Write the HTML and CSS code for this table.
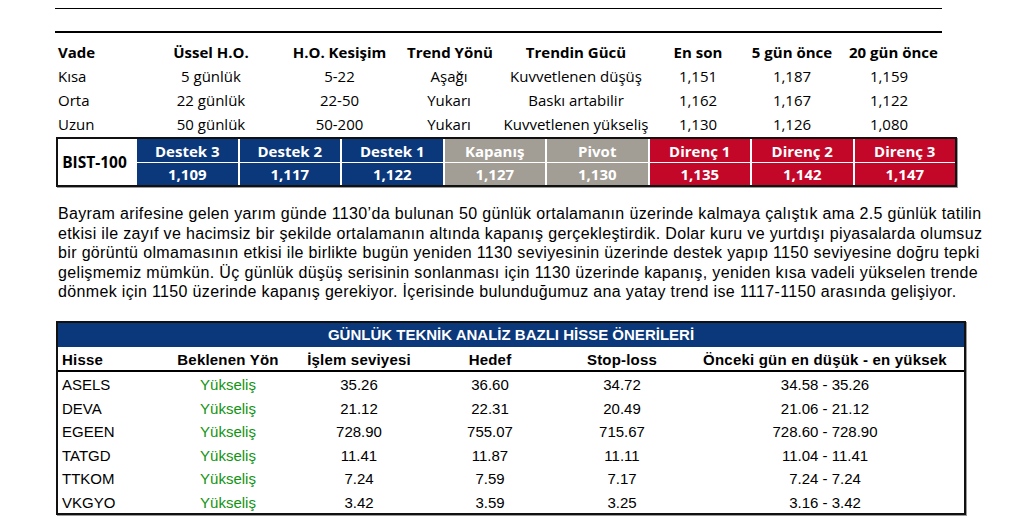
FILE: index.html
```html
<!DOCTYPE html>
<html lang="tr">
<head>
<meta charset="utf-8">
<title>Teknik Analiz</title>
<link rel="stylesheet" href="styles.css">
</head>
<body>
<div class="page">
  <div class="rule-thin"></div>
  <div class="rule-thick"></div>

  <div class="trend">
    <div class="th left">Vade</div><div class="th">Üssel H.O.</div><div class="th">H.O. Kesişim</div><div class="th">Trend Yönü</div><div class="th">Trendin Gücü</div><div class="th">En son</div><div class="th">5 gün önce</div><div class="th">20 gün önce</div>
    <div class="left">Kısa</div><div>5 günlük</div><div>5-22</div><div>Aşağı</div><div>Kuvvetlenen düşüş</div><div>1,151</div><div>1,187</div><div>1,159</div>
    <div class="left">Orta</div><div>22 günlük</div><div>22-50</div><div>Yukarı</div><div>Baskı artabilir</div><div>1,162</div><div>1,167</div><div>1,122</div>
    <div class="left">Uzun</div><div>50 günlük</div><div>50-200</div><div>Yukarı</div><div>Kuvvetlenen yükseliş</div><div>1,130</div><div>1,126</div><div>1,080</div>
  </div>

  <div class="levels">
    <div class="lv-name">BIST-100</div>
    <div class="lv blue">Destek 3</div><div class="lv blue">Destek 2</div><div class="lv blue">Destek 1</div><div class="lv gray">Kapanış</div><div class="lv gray">Pivot</div><div class="lv red">Direnç 1</div><div class="lv red">Direnç 2</div><div class="lv red">Direnç 3</div>
    <div class="lv blue">1,109</div><div class="lv blue">1,117</div><div class="lv blue">1,122</div><div class="lv gray">1,127</div><div class="lv gray">1,130</div><div class="lv red">1,135</div><div class="lv red">1,142</div><div class="lv red">1,147</div>
  </div>

  <p class="comment">
    <span class="jl">Bayram arifesine gelen yarım günde 1130’da bulunan 50 günlük ortalamanın üzerinde kalmaya çalıştık ama 2.5 günlük tatilin</span>
    <span class="jl">etkisi ile zayıf ve hacimsiz bir şekilde ortalamanın altında kapanış gerçekleştirdik. Dolar kuru ve yurtdışı piyasalarda olumsuz</span>
    <span class="jl">bir görüntü olmamasının etkisi ile birlikte bugün yeniden 1130 seviyesinin üzerinde destek yapıp 1150 seviyesine doğru tepki</span>
    <span class="jl">gelişmemiz mümkün. Üç günlük düşüş serisinin sonlanması için 1130 üzerinde kapanış, yeniden kısa vadeli yükselen trende</span>
    <span class="ll">dönmek için 1150 üzerinde kapanış gerekiyor. İçerisinde bulunduğumuz ana yatay trend ise 1117-1150 arasında gelişiyor.</span>
  </p>

  <div class="picks">
    <div class="picks-title">GÜNLÜK TEKNİK ANALİZ BAZLI HİSSE ÖNERİLERİ</div>
    <div class="picks-grid head">
      <div class="left">Hisse</div><div>Beklenen Yön</div><div>İşlem seviyesi</div><div>Hedef</div><div>Stop-loss</div><div>Önceki gün en düşük - en yüksek</div>
    </div>
    <div class="picks-body">
      <div class="picks-grid"><div class="left">ASELS</div><div class="up">Yükseliş</div><div>35.26</div><div>36.60</div><div>34.72</div><div>34.58 - 35.26</div></div>
      <div class="picks-grid"><div class="left">DEVA</div><div class="up">Yükseliş</div><div>21.12</div><div>22.31</div><div>20.49</div><div>21.06 - 21.12</div></div>
      <div class="picks-grid"><div class="left">EGEEN</div><div class="up">Yükseliş</div><div>728.90</div><div>755.07</div><div>715.67</div><div>728.60 - 728.90</div></div>
      <div class="picks-grid"><div class="left">TATGD</div><div class="up">Yükseliş</div><div>11.41</div><div>11.87</div><div>11.11</div><div>11.04 - 11.41</div></div>
      <div class="picks-grid"><div class="left">TTKOM</div><div class="up">Yükseliş</div><div>7.24</div><div>7.59</div><div>7.17</div><div>7.24 - 7.24</div></div>
      <div class="picks-grid"><div class="left">VKGYO</div><div class="up">Yükseliş</div><div>3.42</div><div>3.59</div><div>3.25</div><div>3.16 - 3.42</div></div>
    </div>
  </div>
</div>
</body>
</html>
```

FILE: styles.css
```css
* { box-sizing: border-box; }
html, body { margin: 0; padding: 0; background: #fff; }
body { color: #000; }

.page {
  width: 1018px;
  height: 526px;
  padding-top: 8px;
  overflow: hidden;
}

.rule-thin {
  margin-left: 55px;
  width: 887px;
  height: 1px;
  background: #000;
}
.rule-thick {
  margin-left: 55px;
  margin-top: 22px;
  width: 887px;
  height: 2px;
  background: #000;
}

/* Trend table */
.trend {
  margin-left: 55px;
  margin-top: 7px;
  display: grid;
  grid-template-columns: 95px 122px 135px 84px 170px 74px 114px 80px;
  grid-auto-rows: 24px;
  font-family: "Open Sans", "Noto Sans", sans-serif;
  font-size: 15px;
  align-items: center;
  text-align: center;
  white-space: nowrap;
}
.trend .th { font-weight: 700; }
.trend .left { text-align: left; padding-left: 3px; }

/* Support / resistance band */
.levels {
  margin-left: 56px;
  margin-top: 1px;
  width: 901px;
  border: 2px solid #111;
  box-shadow: 1px 1px 0 #9a9a9a;
  background: #fff;
  display: grid;
  grid-template-columns: 77px repeat(8, 1fr);
  grid-template-rows: 23px 22px;
  column-gap: 2px;
  row-gap: 1px;
  font-family: "Open Sans", "Noto Sans", sans-serif;
  font-size: 15px;
  font-weight: 700;
}
.lv-name {
  grid-row: 1 / span 2;
  display: flex;
  align-items: center;
  justify-content: center;
  padding-right: 6px;
  color: #000;
  margin-right: -2px;
  font-size: 15.5px;
}
.lv {
  display: flex;
  align-items: center;
  justify-content: center;
  color: #fff;
}
.blue { background: #0b387a; }
.gray { background: #a29d95; }
.red { background: #c30729; }

/* Commentary */
.comment {
  margin: 17px 0 0 58px;
  width: 904px;
  font-family: "Liberation Sans", Arial, sans-serif;
  font-size: 16px;
  letter-spacing: 0.35px;
  line-height: 19.5px;
  color: #000;
}
.comment .jl {
  display: block;
  text-align: justify;
  text-align-last: justify;
  white-space: nowrap;
}
.comment .ll { display: block; white-space: nowrap; }

/* Stock picks */
.picks {
  margin: 19px 0 0 56px;
  width: 910px;
  border: 2px solid #111;
  box-shadow: 1px 1px 0 #9a9a9a;
  font-family: "Liberation Sans", Arial, sans-serif;
  font-size: 15px;
}
.picks-title {
  height: 24px;
  background: #0b387a;
  color: #fff;
  font-weight: 700;
  display: flex;
  align-items: center;
  justify-content: center;
}
.picks-grid {
  display: grid;
  grid-template-columns: 102px 136px 126px 136px 128px 1fr;
  height: 23.5px;
  padding-top: 3px;
  align-items: center;
  text-align: center;
  white-space: nowrap;
}
.picks-grid .left { text-align: left; padding-left: 4px; }
.picks-grid.head {
  height: 25px;
  font-weight: 700;
  letter-spacing: 0.2px;
  border-bottom: 2px solid #000;
}
.up { color: #119411; }
```
